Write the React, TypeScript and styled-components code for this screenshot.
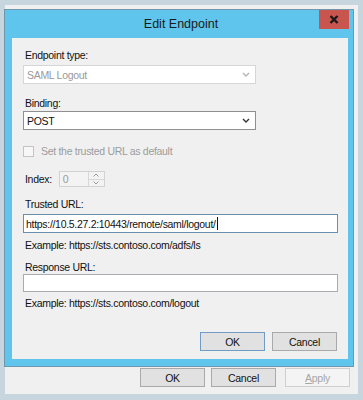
import styled, { createGlobalStyle } from "styled-components";

const GlobalStyle = createGlobalStyle`
  html, body {
    margin: 0;
    padding: 0;
    background: #c7d5df;
  }
  body {
    font-family: "Liberation Sans", Arial, sans-serif;
  }
`;

const Desktop = styled.div`
  position: relative;
  width: 363px;
  height: 400px;
  overflow: hidden;
  background: #c7d5df;
`;

const ParentWindow = styled.div`
  position: absolute;
  left: 5px;
  top: 5px;
  width: 353px;
  height: 389px;
  background: #f0f0f0;
  display: flex;
  flex-direction: column;
  justify-content: flex-end;
`;

const ParentFooter = styled.div`
  display: flex;
  justify-content: flex-end;
  padding: 0 8px 7px 0;
`;

const Dialog = styled.div`
  position: absolute;
  left: 4px;
  top: 9px;
  width: 350px;
  height: 358px;
  box-sizing: border-box;
  border: 1px solid #6f97ad;
  background: #5fc5ed;
  display: flex;
  flex-direction: column;
  padding: 0 5px 7px 7px;
`;

const TitleBar = styled.div`
  position: relative;
  height: 28px;
  display: flex;
  align-items: center;
  justify-content: center;
  font-size: 12.5px;
  color: #1b1b1b;
  padding-left: 2px;
`;

const CloseButton = styled.div`
  position: absolute;
  top: 0;
  right: -1px;
  width: 30px;
  height: 19px;
  background: #c8564f;
  display: flex;
  align-items: center;
  justify-content: center;
`;

const Content = styled.div`
  flex: 1;
  background: #f0f0f0;
  padding: 10px 10px 0 11px;
  display: flex;
  flex-direction: column;
  font-size: 10.5px;
  letter-spacing: -0.3px;
  color: #111;
`;

const Label = styled.div<{ $top: number; $muted?: boolean }>`
  margin-top: ${(p) => p.$top}px;
  padding-left: 2px;
  height: 14px;
  line-height: 14px;
  color: ${(p) => (p.$muted ? "#9c9c9c" : "#111")};
`;

const Combo = styled.div<{ $top: number; $disabled?: boolean }>`
  margin-top: ${(p) => p.$top}px;
  width: 233px;
  height: 19px;
  box-sizing: border-box;
  border: 1px solid ${(p) => (p.$disabled ? "#d6d6d6" : "#8f8f8f")};
  background: #fff;
  display: flex;
  align-items: center;
  justify-content: space-between;
  padding: 0 5px 0 3px;
  color: ${(p) => (p.$disabled ? "#9a9a9a" : "#111")};
`;

const Row = styled.div<{ $top: number }>`
  margin-top: ${(p) => p.$top}px;
  display: flex;
  align-items: center;
`;

const CheckBox = styled.div`
  width: 11px;
  height: 11px;
  box-sizing: border-box;
  border: 1px solid #c4c4c4;
  background: #f7f7f7;
  margin-right: 5px;
`;

const SpinBox = styled.div`
  margin-left: 7px;
  width: 46px;
  height: 16px;
  box-sizing: border-box;
  border: 1px solid #d2d2d2;
  background: #f3f3f3;
  display: flex;
`;

const SpinValue = styled.div`
  flex: 1;
  padding-left: 3px;
  line-height: 14px;
  color: #9a9a9a;
`;

const SpinButtons = styled.div`
  width: 15px;
  border-left: 1px solid #d8d8d8;
  display: flex;
  flex-direction: column;
`;

const SpinButton = styled.div`
  flex: 1;
  display: flex;
  align-items: center;
  justify-content: center;
  & + & {
    border-top: 1px solid #d8d8d8;
  }
`;

const TextBox = styled.div<{ $top: number; $focused?: boolean }>`
  margin-top: ${(p) => p.$top}px;
  height: ${(p) => (p.$focused ? 19 : 18)}px;
  box-sizing: border-box;
  border: 1px solid ${(p) => (p.$focused ? "#6a8fae" : "#a9abb0")};
  background: #fff;
  display: flex;
  align-items: center;
  padding-left: 2px;
  color: #111;
  white-space: nowrap;
`;

const Caret = styled.span`
  display: inline-block;
  width: 1px;
  height: 13px;
  background: #111;
  margin-left: 1px;
`;

const ButtonRow = styled.div`
  margin-top: 22px;
  display: flex;
  justify-content: flex-end;
  gap: 7px;
  padding-right: 1px;
`;

const Button = styled.div<{ $primary?: boolean; $disabled?: boolean; $gap?: number }>`
  margin-left: ${(p) => p.$gap ?? 0}px;
  width: 65px;
  height: 19px;
  box-sizing: border-box;
  border: 1px solid
    ${(p) => (p.$primary ? "#6e9cc4" : p.$disabled ? "#cfcfcf" : "#a9a9a9")};
  background: ${(p) => (p.$disabled ? "#f4f4f4" : "#e1e1e1")};
  color: ${(p) => (p.$disabled ? "#a6a6a6" : "#111")};
  font-size: 10.5px;
  letter-spacing: -0.3px;
  display: flex;
  align-items: center;
  justify-content: center;
`;

function Chevron({ color }: { color: string }) {
  return (
    <svg width="8" height="5" viewBox="0 0 8 5">
      <path d="M1 1 L4 4 L7 1" fill="none" stroke={color} strokeWidth="1.4" />
    </svg>
  );
}

function SpinArrow({ up }: { up?: boolean }) {
  return (
    <svg width="6" height="4" viewBox="0 0 6 4">
      <path
        d={up ? "M0.5 3.5 L3 1 L5.5 3.5" : "M0.5 0.5 L3 3 L5.5 0.5"}
        fill="none"
        stroke="#9a9a9a"
        strokeWidth="1"
      />
    </svg>
  );
}

export default function App() {
  return (
    <Desktop>
      <GlobalStyle />
      <ParentWindow>
        <ParentFooter>
          <Button>OK</Button>
          <Button $gap={6}>Cancel</Button>
          <Button $gap={9} $disabled>
            <u>A</u>pply
          </Button>
        </ParentFooter>
      </ParentWindow>

      <Dialog>
        <TitleBar>
          Edit Endpoint
          <CloseButton>
            <svg width="10" height="9" viewBox="0 0 10 9">
              <path d="M1.5 1 L8.5 8 M8.5 1 L1.5 8" stroke="#1a1a1a" strokeWidth="2.4" />
            </svg>
          </CloseButton>
        </TitleBar>

        <Content>
          <Label $top={0}>Endpoint type:</Label>
          <Combo $top={3} $disabled>
            SAML Logout
            <Chevron color="#b4b4b4" />
          </Combo>

          <Label $top={12}>Binding:</Label>
          <Combo $top={1}>
            POST
            <Chevron color="#333" />
          </Combo>

          <Row $top={14}>
            <CheckBox />
            <Label $top={0} $muted>
              Set the trusted URL as default
            </Label>
          </Row>

          <Row $top={13}>
            <Label $top={0}>Index:</Label>
            <SpinBox>
              <SpinValue>0</SpinValue>
              <SpinButtons>
                <SpinButton>
                  <SpinArrow up />
                </SpinButton>
                <SpinButton>
                  <SpinArrow />
                </SpinButton>
              </SpinButtons>
            </SpinBox>
          </Row>

          <Label $top={10}>Trusted URL:</Label>
          <TextBox $top={3} $focused>
            https://10.5.27.2:10443/remote/saml/logout/
            <Caret />
          </TextBox>
          <Label $top={5}>Example: https://sts.contoso.com/adfs/ls</Label>

          <Label $top={8}>Response URL:</Label>
          <TextBox $top={0} />
          <Label $top={4}>Example: https://sts.contoso.com/logout</Label>

          <ButtonRow>
            <Button $primary>OK</Button>
            <Button>Cancel</Button>
          </ButtonRow>
        </Content>
      </Dialog>
    </Desktop>
  );
}
